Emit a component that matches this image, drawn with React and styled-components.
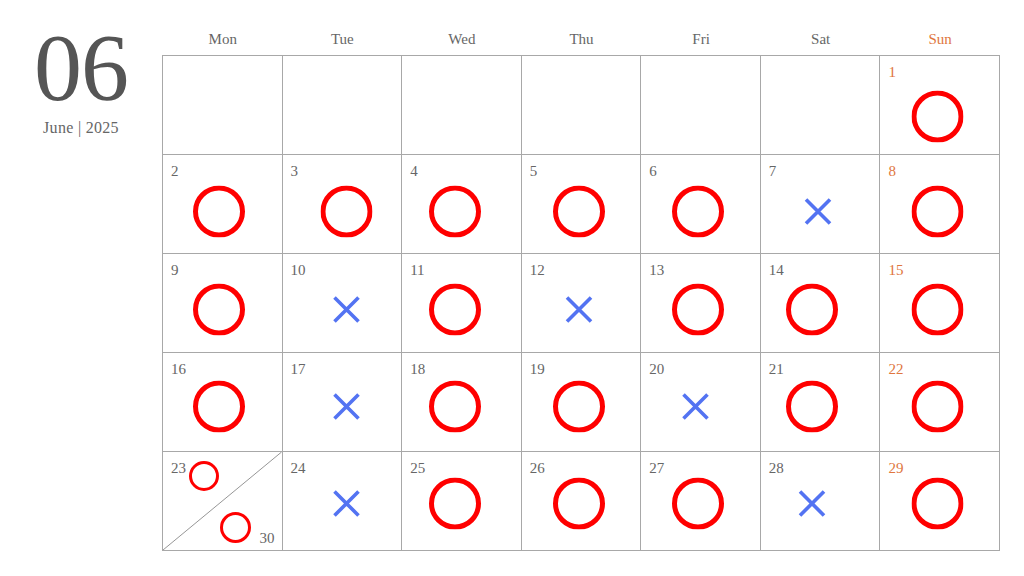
import React from 'react'
import styled, { createGlobalStyle } from 'styled-components'

const GlobalStyle = createGlobalStyle`
  html, body {
    margin: 0;
    padding: 0;
    background: #ffffff;
  }
  body {
    font-family: "Liberation Serif", "DejaVu Serif", serif;
    color: #666;
  }
`

const days = ['Mon', 'Tue', 'Wed', 'Thu', 'Fri', 'Sat', 'Sun']

// hand placed marks in the original drawing are not quite centred
const colDx = [-3, 4.5, -6, -2, -3, -8, -2.5]
const rowDy = [2.5, -1.5, -2.5, -4.5, -6.5]

// o = available, x = closed, null = empty cell, 'split' = shared 23/30
const cells = [
  null, null, null, null, null, null, { d: 1, m: 'o' },
  { d: 2, m: 'o' }, { d: 3, m: 'o' }, { d: 4, m: 'o' }, { d: 5, m: 'o' }, { d: 6, m: 'o' }, { d: 7, m: 'x', dx: -2 }, { d: 8, m: 'o' },
  { d: 9, m: 'o' }, { d: 10, m: 'x' }, { d: 11, m: 'o' }, { d: 12, m: 'x' }, { d: 13, m: 'o' }, { d: 14, m: 'o' }, { d: 15, m: 'o' },
  { d: 16, m: 'o' }, { d: 17, m: 'x' }, { d: 18, m: 'o' }, { d: 19, m: 'o' }, { d: 20, m: 'x', dx: -5.5 }, { d: 21, m: 'o' }, { d: 22, m: 'o' },
  'split', { d: 24, m: 'x' }, { d: 25, m: 'o' }, { d: 26, m: 'o' }, { d: 27, m: 'o' }, { d: 28, m: 'x' }, { d: 29, m: 'o' },
]

const Circle = ({ size = 52, stroke = 5 }) => (
  <svg width={size} height={size} viewBox={`0 0 ${size} ${size}`}>
    <circle cx={size / 2} cy={size / 2} r={size / 2 - stroke / 2} fill="none" stroke="#ff0000" strokeWidth={stroke} />
  </svg>
)

const Cross = () => (
  <svg width="28" height="28" viewBox="0 0 28 28">
    <path d="M2 2 L26 26 M26 2 L2 26" stroke="#5373f2" strokeWidth="3.6" strokeLinecap="butt" />
  </svg>
)

export default function App() {
  return (
    <>
      <GlobalStyle />
      <Page>
        <Side>
          <BigMonth>06</BigMonth>
          <SubTitle>June | 2025</SubTitle>
        </Side>
        <Calendar>
          <HeaderRow>
            {days.map((d) => (
              <DayLabel key={d} $sun={d === 'Sun'}>{d}</DayLabel>
            ))}
          </HeaderRow>
          <Grid>
            {cells.map((c, i) => {
              const col = i % 7
              const row = Math.floor(i / 7)
              const sun = col === 6
              if (c === null) return <Cell key={i} />
              if (c === 'split') {
                return (
                  <SplitCell key={i}>
                    <Diagonal viewBox="0 0 100 100" preserveAspectRatio="none">
                      <line x1="0" y1="100" x2="100" y2="0" stroke="#8a8a8a" strokeWidth="0.9" vectorEffect="non-scaling-stroke" />
                    </Diagonal>
                    <SplitTop>
                      <DayNum>23</DayNum>
                      <Circle size={30} stroke={3} />
                    </SplitTop>
                    <SplitBottom>
                      <Circle size={31} stroke={3} />
                      <DayNum>30</DayNum>
                    </SplitBottom>
                  </SplitCell>
                )
              }
              const dx = c.dx !== undefined ? c.dx : colDx[col]
              return (
                <Cell key={i}>
                  <DayNum $sun={sun}>{c.d}</DayNum>
                  <Mark $dx={dx} $dy={rowDy[row]}>
                    {c.m === 'o' ? <Circle /> : <Cross />}
                  </Mark>
                </Cell>
              )
            })}
          </Grid>
        </Calendar>
      </Page>
    </>
  )
}

const Page = styled.div`
  display: flex;
  width: 1024px;
  height: 576px;
  box-sizing: border-box;
`

const Side = styled.div`
  width: 162px;
  flex-shrink: 0;
  display: flex;
  flex-direction: column;
  align-items: center;
  padding-top: 20px;
`

const BigMonth = styled.div`
  font-size: 96px;
  line-height: 96px;
  color: #555;
  letter-spacing: -1px;
`

const SubTitle = styled.div`
  margin-top: 3px;
  font-size: 16px;
  color: #666;
  letter-spacing: 0.3px;
`

const Calendar = styled.div`
  width: 838px;
  display: flex;
  flex-direction: column;
`

const HeaderRow = styled.div`
  height: 55px;
  display: grid;
  grid-template-columns: repeat(7, 1fr);
  align-items: end;
  padding-left: 1px;
  box-sizing: border-box;
  padding-bottom: 7px;
`

const DayLabel = styled.div`
  text-align: center;
  font-size: 15px;
  line-height: 18px;
  color: ${(p) => (p.$sun ? '#e0763e' : '#666')};
`

const Grid = styled.div`
  display: grid;
  grid-template-columns: repeat(7, 1fr);
  grid-auto-rows: 99px;
  border-top: 1px solid #a8a8a8;
  border-left: 1px solid #a8a8a8;
`

const Cell = styled.div`
  position: relative;
  border-right: 1px solid #a8a8a8;
  border-bottom: 1px solid #a8a8a8;
  display: flex;
  flex-direction: column;
  padding: 7px 0 8px 0;
  box-sizing: border-box;
  min-width: 0;
`

const DayNum = styled.div`
  font-size: 15px;
  line-height: 18px;
  padding-left: 8px;
  color: ${(p) => (p.$sun ? '#e0763e' : '#666')};
`

const Mark = styled.div`
  flex: 1;
  display: flex;
  align-items: center;
  justify-content: center;
  transform: translate(${(p) => p.$dx}px, ${(p) => p.$dy}px);
`

const SplitCell = styled(Cell)`
  padding: 0;
  justify-content: space-between;
`

const Diagonal = styled.svg`
  position: absolute;
  inset: 0;
  width: 100%;
  height: 100%;
`

const SplitTop = styled.div`
  display: flex;
  align-items: flex-start;
  gap: 3px;
  padding: 9px 0 0 0;
  ${DayNum} {
    margin-top: -2px;
  }
`

const SplitBottom = styled.div`
  display: flex;
  justify-content: flex-end;
  align-items: flex-end;
  gap: 9px;
  padding: 0 7px 6px 0;
  svg {
    margin-bottom: 1px;
  }
  ${DayNum} {
    margin-bottom: -3px;
    padding-left: 0;
  }
`
